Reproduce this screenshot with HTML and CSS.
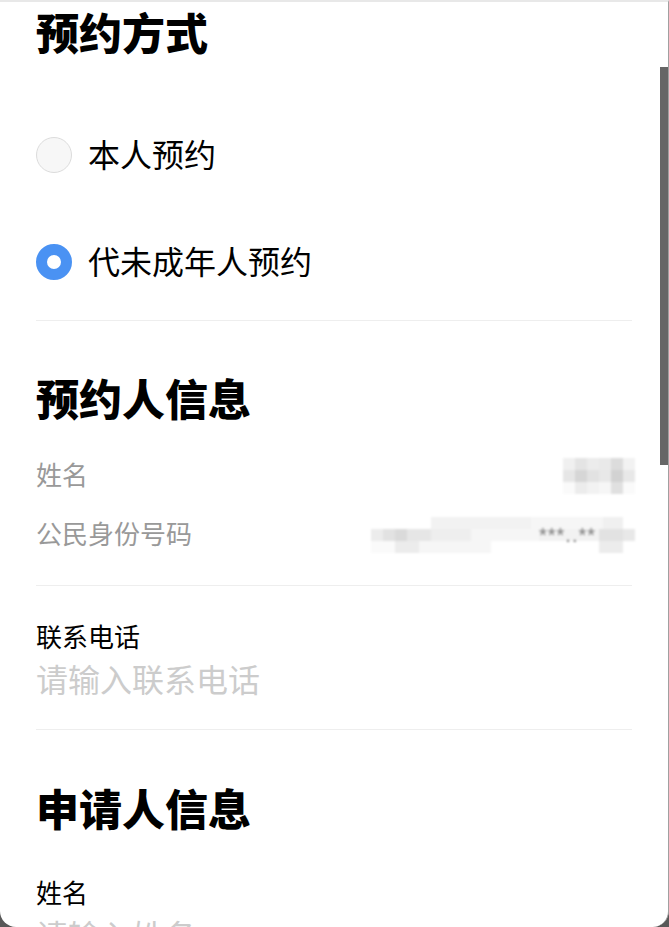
FILE: index.html
```html
<!DOCTYPE html>
<html lang="zh-CN">
<head>
  <meta charset="UTF-8">
  <meta name="viewport" content="width=device-width, initial-scale=1.0">
  <title>预约信息</title>
  <link rel="stylesheet" href="styles.css">
</head>
<body>
  <div class="sheet">
    <div class="scroll-thumb"></div>
    <div class="content">
      <section class="block block-mode">
        <h2 class="section-title first">预约方式</h2>
        <div class="radio-list">
          <label class="radio-row">
            <span class="radio"></span>
            <span class="radio-text">本人预约</span>
          </label>
          <label class="radio-row">
            <span class="radio checked"></span>
            <span class="radio-text">代未成年人预约</span>
          </label>
        </div>
      </section>

      <section class="block block-booker">
        <h2 class="section-title">预约人信息</h2>
        <div class="info-list">
          <div class="info-row">
            <span class="info-label">姓名</span>
            <span class="mask mask-name"></span>
          </div>
          <div class="info-row">
            <span class="info-label">公民身份号码</span>
            <span class="mask mask-id"><span class="mask-stars">***..**</span></span>
          </div>
        </div>
      </section>

      <section class="block block-phone">
        <div class="field">
          <label class="field-label" for="phone">联系电话</label>
          <input class="field-input" id="phone" type="tel" placeholder="请输入联系电话">
        </div>
      </section>

      <section class="block block-applicant">
        <h2 class="section-title">申请人信息</h2>
        <div class="field applicant-field">
          <label class="field-label" for="applicant-name">姓名</label>
          <input class="field-input" id="applicant-name" type="text" placeholder="请输入姓名">
        </div>
      </section>
    </div>
  </div>
</body>
</html>
```

FILE: styles.css
```css
body {
  margin: 0;
  height: 927px;
  overflow: hidden;
  background: #585858;
  font-family: "Noto Sans CJK SC", "Noto Sans", sans-serif;
  color: #000;
}
.sheet {
  position: relative;
  height: 927px;
  box-sizing: border-box;
  background: #fff;
  border-top: 2px solid #e8e8e8;
  border-right: 1px solid #a0a0a0;
  border-radius: 0 0 16px 16px;
  overflow: hidden;
}
.scroll-thumb {
  position: absolute;
  top: 65px;
  right: 0;
  width: 8px;
  height: 398px;
  background: #666;
}
.content {
  padding: 0 36px;
}
.block {
  border-bottom: 1px solid #eee;
}
.block:last-child {
  border-bottom: none;
}
.section-title {
  margin: 56px 0 0;
  font-size: 43px;
  line-height: 42px;
  font-weight: 900;
}
.section-title.first {
  margin-top: 8px;
}

/* radio group */
.block-mode {
  padding-bottom: 5px;
}
.radio-list {
  padding-top: 49px;
}
.radio-row {
  display: flex;
  align-items: center;
  gap: 16px;
  height: 107px;
  font-size: 32px;
  line-height: 40px;
}
.radio-text {
  padding-bottom: 4px;
}
.radio {
  width: 36px;
  height: 36px;
  box-sizing: border-box;
  border-radius: 50%;
  border: 1px solid #dcdcdc;
  background: #f7f7f7;
  flex-shrink: 0;
}
.radio.checked {
  border: 11px solid #4a92f3;
  background: #fff;
}

/* read-only info rows */
.block-booker .section-title {
  margin-top: 55px;
}
.info-list {
  margin-top: 28px;
  padding-bottom: 21px;
}
.info-row {
  display: flex;
  align-items: center;
  justify-content: space-between;
  height: 59px;
}
.info-label {
  font-size: 26px;
  line-height: 36px;
  padding-bottom: 4px;
  color: #999;
}
.mask {
  position: relative;
  display: block;
  height: 36px;
  margin-right: -3px;
  filter: blur(1px);
}
.mask-name {
  width: 72px;
  background:
    linear-gradient(90deg, #f0f0f0 0 12px, #e4e4e4 12px 24px, #ececec 24px 36px, #e9e9e9 36px 48px, #dcdcdc 48px 60px, #f2f2f2 60px) 0 0 / 100% 12px no-repeat,
    linear-gradient(90deg, #e6e6e6 0 12px, #d6d6d6 12px 24px, #e2e2e2 24px 36px, #e8e8e8 36px 48px, #d2d2d2 48px 60px, #e8e8e8 60px) 0 12px / 100% 12px no-repeat,
    linear-gradient(90deg, #fafafa 0 12px, #ececec 12px 24px, #f2f2f2 24px 36px, #f6f6f6 36px 48px, #e0e0e0 48px 60px, #fafafa 60px) 0 24px / 100% 12px no-repeat;
}
.mask-id {
  width: 264px;
  background:
    linear-gradient(90deg, #fff 0 60px, #f2f2f2 60px 160px, #f6f6f6 160px 232px, #f0f0f0 232px 252px, #fff 252px) 0 0 / 100% 12px no-repeat,
    linear-gradient(90deg, #ececec 0 12px, #e2e2e2 12px 24px, #dadada 24px 36px, #e6e6e6 36px 60px, #eeeeee 60px 100px, #f6f6f6 100px 168px, #f2f2f2 168px 228px, #e2e2e2 228px 252px, #e8e8e8 252px) 0 12px / 100% 12px no-repeat,
    linear-gradient(90deg, #fafafa 0 24px, #ececec 24px 48px, #f6f6f6 48px 120px, #fff 120px 228px, #ececec 228px 252px, #fff 252px) 0 24px / 100% 12px no-repeat;
}
.mask-stars {
  position: absolute;
  left: 168px;
  top: 6px;
  font-family: "Liberation Sans", sans-serif;
  font-size: 20px;
  line-height: 24px;
  letter-spacing: 1px;
  color: #7a7a7a;
}

/* input fields */
.block-phone {
  padding: 32px 0 29px;
}
.field-label {
  display: block;
  font-size: 26px;
  line-height: 36px;
  color: #000;
}
.field-input {
  display: block;
  width: 100%;
  height: 44px;
  margin-top: 2px;
  padding: 0;
  border: none;
  outline: none;
  font-family: inherit;
  font-size: 32px;
  color: #333;
  background: transparent;
}
.field-input::placeholder {
  color: #ccc;
}
.applicant-field {
  margin-top: 46px;
}
```
